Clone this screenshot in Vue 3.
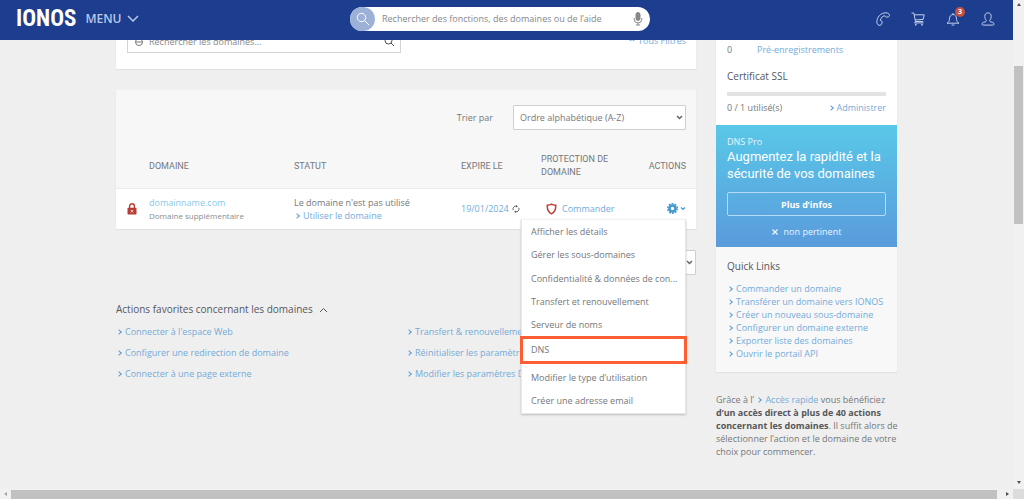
<script setup>
import { ref } from 'vue'

const query = ref('')
const filter = ref('')
const sort = ref('az')

const menuItems = [
  'Afficher les détails',
  'Gérer les sous-domaines',
  'Confidentialité & données de con...',
  'Transfert et renouvellement',
  'Serveur de noms',
  'DNS',
  'Modifier le type d’utilisation',
  'Créer une adresse email',
]

const favourites = [
  "Connecter à l'espace Web",
  'Transfert & renouvellement',
  'Configurer une redirection de domaine',
  'Réinitialiser les paramètres DNS',
  'Connecter à une page externe',
  'Modifier les paramètres DNS',
]

const quickLinks = [
  'Commander un domaine',
  'Transférer un domaine vers IONOS',
  'Créer un nouveau sous-domaine',
  'Configurer un domaine externe',
  'Exporter liste des domaines',
  'Ouvrir le portail API',
]
</script>

<template>
  <div class="shell">
    <div class="view">
      <header class="topbar">
        <div class="brand">
          <a class="logo" href="#">IONOS</a>
          <button class="menu-btn" type="button">
            MENU
            <svg width="12" height="7" viewBox="0 0 12 7"><path d="M1 1l5 5 5-5" /></svg>
          </button>
        </div>
        <form class="search" role="search" @submit.prevent>
          <button class="search-go" type="submit" aria-label="Rechercher">
            <svg width="14" height="14" viewBox="0 0 14 14"><circle cx="5.5" cy="5.5" r="4.2" /><path d="M8.7 8.7l4.3 4.3" /></svg>
          </button>
          <input v-model="query" type="text" aria-label="Recherche" placeholder="Rechercher des fonctions, des domaines ou de l’aide" />
          <button class="mic" type="button" aria-label="Micro">
            <svg width="10" height="14" viewBox="0 0 10 14">
              <rect x="3" y="0.5" width="4" height="8" rx="2" class="solid" />
              <path d="M1.2 6v1.2a3.8 3.8 0 0 0 7.6 0V6M5 11v2M3 13h4" />
            </svg>
          </button>
        </form>
        <nav class="tools">
          <a href="#" aria-label="Téléphone">
            <svg width="14" height="14" viewBox="0 0 14 14"><path d="M4.2 13.3C2.6 13.6 1 12.5.9 10.4.8 4.8 4.7.8 10 .8c1.8 0 3.2.9 3.4 2.3.1 1-.4 1.6-1.3 1.8l-1.5.2c-.9.1-1.4-.4-1.7-1.4-2.4.4-4 2-4.5 4.8 1 .1 1.7.5 1.7 1.4 0 1.3-.6 3.1-1.9 3.4z" /></svg>
          </a>
          <a href="#" aria-label="Panier">
            <svg width="14" height="14" viewBox="0 0 14 14"><path d="M.5 1h2.300l1.700 8.500h7.700M3.200 2.800h10l-1 4.600-8 .6M4.500 9.500l-1 1.400h9" /><circle cx="4.800" cy="12.700" r=".9" class="dot" /><circle cx="11" cy="12.700" r=".9" class="dot" /></svg>
          </a>
          <a class="bell" href="#" aria-label="Notifications">
            <svg width="14" height="14" viewBox="0 0 14 14"><path d="M1 11.200h12c-1.400-.8-2.300-1.800-2.400-3.600C10.500 4.600 9.600 2.500 7 2.500S3.500 4.600 3.400 7.600C3.300 9.400 2.400 10.400 1 11.200zM5.600 13h2.800M7 2.500V1" /></svg>
            <span class="badge">3</span>
          </a>
          <a href="#" aria-label="Compte">
            <svg width="14" height="14" viewBox="0 0 14 14"><path d="M5.300 8.400C4.300 7.500 3.800 6.100 3.800 4.400 3.800 2.200 5 .9 7 .9s3.200 1.300 3.200 3.500c0 1.700-.5 3.100-1.500 4-.1.900.3 1.300 1.300 1.500 1.800.3 2.800.9 3 2 .1.800-.4 1.200-1.200 1.200H2.200C1.400 13.100.9 12.700 1 11.900c.2-1.100 1.200-1.700 3-2 1-.2 1.400-.6 1.300-1.500z" /></svg>
          </a>
        </nav>
      </header>

      <div class="page">
        <main>
          <section class="card filters">
            <label class="filter-box">
              <svg width="10" height="10" viewBox="0 0 10 10"><circle cx="5" cy="5" r="3.500" /><path d="M2 5h6" /></svg>
              <input v-model="filter" type="text" aria-label="Rechercher les domaines" placeholder="Rechercher les domaines..." />
              <svg class="dark" width="11" height="11" viewBox="0 0 11 11"><circle cx="4.500" cy="4.500" r="3.500" /><path d="M7 7l3 3" /></svg>
            </label>
            <a class="all-filters" href="#"><svg width="6" height="6" viewBox="0 0 6 6"><path d="M0 1l1.500 2L3 1M3 1l1.500 2L6 1" /></svg>Tous Filtres</a>
          </section>

          <section class="card domains">
            <div class="sort">
              <label for="sort">Trier par</label>
              <span class="select">
                <select id="sort" v-model="sort"><option value="az">Ordre alphabétique (A-Z)</option></select>
                <svg width="7" height="5" viewBox="0 0 7 5"><path d="M1 1l2.500 2.500L6 1" /></svg>
              </span>
            </div>
            <table>
              <colgroup>
                <col class="c-lock" /><col class="c-name" /><col class="c-state" /><col class="c-date" /><col class="c-prot" /><col />
              </colgroup>
              <thead>
                <tr>
                  <th></th>
                  <th>DOMAINE</th>
                  <th>STATUT</th>
                  <th>EXPIRE LE</th>
                  <th>PROTECTION DE<br />DOMAINE</th>
                  <th class="end">ACTIONS</th>
                </tr>
              </thead>
              <tbody>
                <tr>
                  <td class="lock">
                    <svg width="10" height="12" viewBox="0 0 10 12"><path d="M2.600 5V3.200a2.400 2.400 0 0 1 4.800 0V5" class="shackle" /><rect x=".5" y="4.800" width="9" height="6.700" rx=".8" class="body" /><path d="M3.700 6.900l2.600 2.600M6.300 6.900L3.700 9.500" class="cross" /></svg>
                  </td>
                  <td>
                    <a class="name" href="#">domainname.com</a>
                    <div class="sub">Domaine supplémentaire</div>
                  </td>
                  <td>
                    <div class="state">Le domaine n'est pas utilisé</div>
                    <a class="arrow" href="#">Utiliser le domaine</a>
                  </td>
                  <td>
                    <span class="inline">
                      <a href="#">19/01/2024</a>
                      <svg class="renew" width="8" height="8" viewBox="0 0 8 8"><path d="M1.200 5.200A3 3 0 0 1 4.500 1.100M6.800 2.800A3 3 0 0 1 3.500 6.900" /><path d="M4 0l2 1.200L4 2.600zM4 8L2 6.800 4 5.400z" class="tip" /></svg>
                    </span>
                  </td>
                  <td>
                    <span class="inline order">
                      <svg class="shield" width="11" height="12" viewBox="0 0 11 12"><path d="M5.500 1.200C4.300 2 2.800 2.300 1.200 2.200c0 3.600.3 6.800 4.300 8.700 4-1.900 4.300-5.100 4.300-8.700-1.600.1-3.100-.2-4.300-1z" /></svg>
                      <a href="#">Commander</a>
                    </span>
                  </td>
                  <td class="actions">
                    <button class="gear" type="button" aria-label="Actions" aria-expanded="true">
                      <svg width="11" height="11" viewBox="0 0 10 10"><circle cx="5" cy="5" r="4.300" class="teeth" /><circle cx="5" cy="5" r="2.700" class="ring" /></svg>
                      <svg class="caret" width="6" height="5" viewBox="0 0 6 5"><path d="M1 1.500l2 2 2-2" /></svg>
                    </button>
                    <ul class="popup">
                      <li v-for="item in menuItems" :key="item" :class="{ marked: item === 'DNS' }">
                        <a href="#">{{ item }}</a>
                      </li>
                    </ul>
                  </td>
                </tr>
              </tbody>
            </table>
          </section>

          <div class="pager">
            <span class="select small">
              <select aria-label="Résultats par page"><option></option></select>
              <svg width="7" height="5" viewBox="0 0 7 5"><path d="M1 1l2.500 2.500L6 1" /></svg>
            </span>
          </div>

          <section class="favourites">
            <h2>Actions favorites concernant les domaines <svg width="9" height="6" viewBox="0 0 9 6"><path d="M1 5l3.500-3.500L8 5" /></svg></h2>
            <ul>
              <li v-for="f in favourites" :key="f"><a class="arrow" href="#">{{ f }}</a></li>
            </ul>
          </section>
        </main>

        <aside>
          <section class="card usage">
            <div class="count"><span>0</span><a href="#">Pré-enregistrements</a></div>
            <h3>Certificat SSL</h3>
            <div class="bar"></div>
            <div class="used"><span>0 / 1 utilisé(s)</span><a class="arrow" href="#">Administrer</a></div>
          </section>
          <section class="promo">
            <p>DNS Pro</p>
            <h3>Augmentez la rapidité et la sécurité de vos domaines</h3>
            <button class="more" type="button">Plus d’infos</button>
            <button class="dismiss" type="button"><svg width="6" height="6" viewBox="0 0 6 6"><path d="M.5.5l5 5M5.500.500l-5 5" /></svg>non pertinent</button>
          </section>
          <section class="card quick">
            <h3>Quick Links</h3>
            <ul>
              <li v-for="q in quickLinks" :key="q"><a class="arrow" href="#">{{ q }}</a></li>
            </ul>
          </section>
          <p class="hint">
            Grâce à l’ <a class="arrow" href="#">Accès rapide</a> vous bénéficiez <b>d’un accès direct à plus de 40 actions concernant les domaines</b>. Il suffit alors de sélectionner l’action et le domaine de votre choix pour commencer.
          </p>
        </aside>
      </div>
    </div>

    <div class="vbar"><i class="up"></i><span></span><i class="down"></i></div>
    <div class="hbar"><i class="left"></i><span></span><i class="right"></i></div>
    <div class="corner"></div>
  </div>
</template>

<style>
body {
  background: #efefef;
}
</style>

<style scoped>
.shell {
  display: grid;
  grid-template-columns: 1fr 11px;
  grid-template-rows: 1fr 10px;
  height: 100vh;
  font: 9px/13px "Open Sans", "Noto Sans", sans-serif;
  color: #75777a;
  background: #efefef;
}
.shell * {
  box-sizing: border-box;
}
.view {
  position: relative;
  overflow: hidden;
  min-width: 0;
}
svg {
  fill: none;
  stroke: currentColor;
  flex: none;
}
a {
  color: #74abd8;
  text-decoration: none;
}
button, input, select {
  font: inherit;
  color: inherit;
  border: 0;
  padding: 0;
  margin: 0;
  background: none;
}
input:focus {
  outline: 0;
}
ul, p, h2, h3 {
  list-style: none;
  margin: 0;
  padding: 0;
  font-weight: 400;
}
.arrow::before {
  content: "";
  display: inline-block;
  width: 3px;
  height: 3px;
  margin: 0 4px 1px 1px;
  border: solid #5b9fd3;
  border-width: 1px 1px 0 0;
  transform: rotate(45deg);
}

/* Top bar */
.topbar {
  position: absolute;
  inset: 0 0 auto;
  z-index: 5;
  display: grid;
  grid-template-columns: 1fr 300px 1fr;
  align-items: center;
  height: 40px;
  padding: 0 13px 3px 0;
  background: #1d3d8f;
  color: #b9c7e6;
}
.brand {
  display: flex;
  align-items: center;
  gap: 9px;
  padding-left: 16px;
}
.logo {
  color: #fff;
  font: 700 23px/26px "Roboto Condensed", "Open Sans Condensed", "Liberation Sans Narrow", Roboto, sans-serif;
}
.menu-btn {
  display: flex;
  align-items: center;
  gap: 5px;
  font-weight: 600;
  font-size: 12px;
  line-height: 16px;
}
.menu-btn svg {
  stroke-width: 1.500;
}
.search {
  display: flex;
  align-items: center;
  height: 24px;
  border-radius: 12px;
  background: #fff;
  color: #85878a;
}
.search-go {
  display: grid;
  place-items: center;
  width: 25px;
  height: 24px;
  border-radius: 12px;
  background: #9db1d8;
  color: #fff;
}
.search input {
  flex: 1;
  min-width: 0;
  padding-left: 7px;
  font-size: 9px;
}
.search input::placeholder,
.filter-box input::placeholder {
  color: #85878a;
  opacity: 1;
}
.mic {
  display: flex;
  margin-right: 7px;
}
.mic .solid {
  fill: currentColor;
}
.tools {
  display: flex;
  justify-content: flex-end;
  gap: 21px;
  padding-right: 5px;
}
.tools a {
  display: flex;
  color: #c3cfea;
}
.dot {
  fill: currentColor;
  stroke: none;
}
.bell {
  position: relative;
}
.badge {
  position: absolute;
  top: -5px;
  left: 9px;
  width: 10px;
  height: 10px;
  border-radius: 5px;
  background: #c9503f;
  color: #fff;
  font-weight: 700;
  font-size: 7px;
  line-height: 10px;
  text-align: center;
}

/* Page */
.page {
  display: grid;
  grid-template-columns: minmax(0, 1fr) 181px;
  gap: 20px;
  padding: 0 116px;
}
.card {
  background: #fff;
  box-shadow: 0 1px 1px #e2e2e2;
}
.filters {
  display: flex;
  justify-content: space-between;
  align-items: flex-start;
  padding: 30px 10px 16px 11px;
}
.filter-box {
  display: flex;
  align-items: center;
  width: 274px;
  height: 23px;
  padding: 0 5px 0 6px;
  gap: 5px;
  border: 1px solid #d3d3d3;
}
.filter-box input {
  flex: 1;
  min-width: 0;
  font-size: 9px;
}
.filter-box .dark {
  color: #4a4c50;
}
.all-filters {
  display: flex;
  align-items: center;
  gap: 3px;
  line-height: 22px;
}
.domains {
  margin-top: 21px;
}
.sort {
  display: flex;
  justify-content: flex-end;
  align-items: center;
  gap: 20px;
  padding: 15px 10px;
  background: #f7f7f7;
}
.select {
  display: grid;
  align-items: center;
  width: 173px;
}
.select > * {
  grid-area: 1 / 1;
}
.select svg {
  justify-self: end;
  margin-right: 3px;
  stroke-width: 1.500;
  pointer-events: none;
  color: #606266;
}
.select select {
  width: 100%;
  height: 25px;
  padding: 0 6px;
  appearance: none;
  border: 1px solid #cfcfcf;
  background: #fff;
  border-radius: 1px;
  font-size: 9px;
}
.select.small {
  width: 40px;
}
table {
  width: 100%;
  table-layout: fixed;
  border-collapse: collapse;
}
.c-lock { width: 33px; }
.c-name { width: 145px; }
.c-state { width: 167px; }
.c-date { width: 80px; }
.c-prot { width: 85px; }
th {
  height: 43px;
  padding: 0;
  background: #f7f7f7;
  font: 400 9px/13px Roboto, sans-serif;
  text-align: left;
  color: #75777a;
  border-bottom: 1px solid #ececec;
}
th.end {
  text-align: right;
  padding-right: 10px;
}
td {
  height: 41px;
  padding: 0;
}
.lock {
  padding-left: 11px;
}
.lock svg {
  display: block;
}
.shackle { stroke: #b93b36; stroke-width: 1.400; }
.body { fill: #b93b36; stroke: none; }
.cross { stroke: #f4d4d2; stroke-width: 1; }
.name {
  color: #86caea;
}
.sub {
  font-size: 8px;
  color: #8a8c8e;
}
.inline {
  display: flex;
  align-items: center;
  gap: 3px;
}
.order {
  gap: 5px;
  padding-left: 5px;
}
.renew { color: #606266; }
.tip { fill: currentColor; stroke: none; }
.shield { color: #bd4139; stroke-width: 1.500; }
.actions {
  position: relative;
}
.gear {
  display: flex;
  align-items: center;
  gap: 2px;
  margin: 0 10px 0 auto;
  color: #459ad2;
}
.teeth { stroke-width: 1.400; stroke-dasharray: 1.700 1.000; }
.ring { stroke-width: 2.400; }
.caret { stroke-width: 1.200; }
.popup {
  position: absolute;
  top: 30px;
  right: 10px;
  z-index: 3;
  display: flex;
  flex-direction: column;
  width: 165px;
  height: 195px;
  background: #fff;
  border: 1px solid #e6e6e6;
  border-top-color: #f2f2f2;
  box-shadow: 0 1px 2px #bdbdbd;
}
.popup li {
  flex: 1;
  display: flex;
  align-items: center;
  padding: 0 9px;
}
.popup a {
  color: #75777a;
  white-space: nowrap;
}
.popup .marked {
  flex: 0 0 28px;
  margin: -1px -2px 2px;
  padding: 0 8px;
  border: 3px solid #fd5f33;
}
.pager {
  display: flex;
  justify-content: flex-end;
  margin-top: 21px;
}
.favourites {
  margin-top: 26px;
}
h2, h3 {
  font-size: 10px;
  line-height: 16px;
  color: #55575f;
}
h2 svg {
  margin-left: 4px;
}
.favourites ul {
  display: grid;
  grid-template-columns: 1fr 1fr;
  margin-top: 4px;
  line-height: 21px;
}

/* Sidebar */
.usage {
  height: 125px;
  padding: 43px 11px 0;
}
.count {
  display: grid;
  grid-template-columns: 30px 1fr;
}
.usage h3 {
  margin-top: 12px;
}
.bar {
  height: 4px;
  margin-top: 8px;
  background: #e3e3e3;
}
.used {
  display: flex;
  justify-content: space-between;
  margin-top: 5px;
}
.promo {
  padding: 10px 11px 9px;
  background: linear-gradient(#59c8e8, #5a9bdc);
  color: #eaf6fd;
}
.promo h3 {
  font: 400 13px/17px Roboto, sans-serif;
  color: #fff;
}
.more {
  display: block;
  width: 100%;
  height: 24px;
  margin: 10px 0 9px;
  border: 1px solid #b5dcf4;
  border-radius: 2px;
  font-weight: 700;
  font-size: 9px;
  color: #fff;
}
.dismiss {
  display: flex;
  align-items: center;
  gap: 6px;
  margin: 0 auto;
}
.dismiss svg {
  stroke-width: 1.300;
}
.quick {
  padding: 11px 11px 12px;
  background: #f8f8f8;
}
.quick ul {
  margin-top: 8px;
}
.hint {
  margin: 21px -4px 0 0;
}
.hint b {
  color: #55575a;
}

/* Scroll bars */
.vbar, .hbar {
  display: flex;
  align-items: center;
  background: #f1f1f1;
}
.vbar {
  flex-direction: column;
}
.vbar span {
  width: 9px;
  height: 158px;
  margin: 60px 0 auto;
  background: #c1c1c1;
}
.hbar span {
  flex: 1;
  height: 9px;
  margin: 1px 9px 0 4px;
  background: #c1c1c1;
}
.corner {
  background: #dcdcdc;
}
i {
  border: 2px solid transparent;
}
.up {
  margin-top: 1px;
  border-bottom: 3px solid #505050;
}
.down {
  margin-bottom: 3px;
  border-top: 3px solid #505050;
}
.left {
  margin-left: 2px;
  border-right: 3px solid #a3a3a3;
}
.right {
  margin-right: 2px;
  border-left: 3px solid #505050;
}
</style>
